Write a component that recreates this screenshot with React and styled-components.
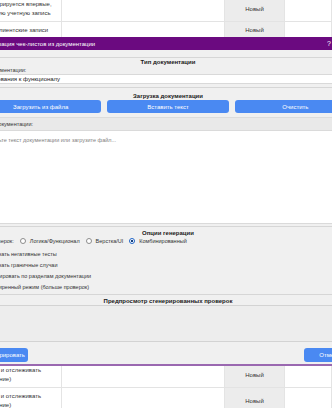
import React from "react";
import styled, { createGlobalStyle } from "styled-components";

const GlobalStyle = createGlobalStyle`
  * { box-sizing: border-box; }
  html, body { margin: 0; padding: 0; background: #fff; }
  body { font-family: "Liberation Sans", Arial, sans-serif; }
`;

const Page = styled.div`
  width: 332px;
  height: 408px;
  overflow: hidden;
  display: flex;
  flex-direction: column;
  background: #fff;
`;

const TableClip = styled.div`
  flex: 0 0 ${(p) => p.$h}px;
  overflow: hidden;
`;

const Rows = styled.div`
  margin-top: -4px;
  margin-left: -44px;
  width: 376px;
`;

const Row = styled.div`
  display: grid;
  grid-template-columns: 106px 163px 60px 1fr;
  border-bottom: 1px solid #e3e3e3;
  font-size: 6px;
  line-height: 9px;
  color: #333;
`;

const Cell = styled.div`
  padding: 4px 4px 3px;
  border-right: 1px solid #e4e4e4;
  white-space: nowrap;
  overflow: hidden;
  background: ${(p) => (p.$grey ? "#ececec" : "#fff")};
  display: flex;
  flex-direction: column;
  justify-content: center;
  align-items: ${(p) => (p.$center ? "center" : "flex-start")};
`;

const Dialog = styled.div`
  flex: 0 0 auto;
  width: 392px;
  margin-left: -28px;
  background: #f0f0f0;
  border-bottom: 2px solid #9a68b0;
  display: flex;
  flex-direction: column;
  font-size: 6px;
  color: #222;
`;

const TitleBar = styled.div`
  height: 13px;
  background: #6b0a80;
  color: #fff;
  display: flex;
  align-items: center;
  justify-content: space-between;
  padding: 0 18px 0 13px;
  font-size: 6px;
`;

const TitleButtons = styled.div`
  display: flex;
  gap: 9px;
  font-size: 7px;
`;

const Body = styled.div`
  padding: 7px 8px 0;
  display: flex;
  flex-direction: column;
`;

const Section = styled.section`
  border-top: 1px solid #d6d6d6;
  padding: ${(p) => p.$pt}px 0 ${(p) => p.$pb}px;
  display: flex;
  flex-direction: column;
`;

const SectionTitle = styled.div`
  font-weight: bold;
  text-align: center;
  line-height: ${(p) => p.$lh || 7}px;
  color: #1a1a1a;
`;

const FieldLabel = styled.div`
  line-height: 8px;
  font-size: 5.5px;
  color: #333;
  margin-left: -2px;
`;

const Combo = styled.div`
  height: 10px;
  background: #fff;
  border: 1px solid #d9d9d9;
  border-radius: 2px;
  display: flex;
  align-items: center;
  justify-content: space-between;
  padding: 0 5px 0 3px;
  color: #222;
`;

const ButtonGrid = styled.div`
  display: grid;
  grid-template-columns: repeat(3, 1fr);
  gap: 6px;
`;

const Button = styled.button`
  height: ${(p) => p.$h}px;
  width: ${(p) => (p.$w ? `${p.$w}px` : "auto")};
  border: none;
  border-radius: 3px;
  background: #4a89f2;
  color: #fff;
  font-family: inherit;
  font-size: 6px;
  padding: 0;
`;

const LabelBand = styled.div`
  margin-top: 4px;
  height: 13px;
  border-top: 1px solid #dcdcdc;
  background: #e9e9e9;
  display: flex;
  align-items: center;
  font-size: 5.5px;
  color: #333;
`;

const Editor = styled.div`
  height: 94px;
  background: #fff;
  border: 1px solid #dadada;
  padding: 6px 3px;
  font-size: 5.5px;
  color: #808080;
`;

const RadioRow = styled.div`
  display: flex;
  align-items: center;
  height: 8px;
  gap: 6px;
  font-size: 5.5px;
  color: #333;
  margin: 0 0 3px -2px;
`;

const Option = styled.label`
  display: flex;
  align-items: center;
  gap: 4px;
  white-space: nowrap;
`;

const Radio = styled.span`
  width: 6px;
  height: 6px;
  border-radius: 50%;
  flex: 0 0 6px;
  border: ${(p) => (p.$on ? "1.5px solid #1d62c6" : "1px solid #8c8c8c")};
  background: ${(p) =>
    p.$on ? "radial-gradient(circle, #16407e 0 1px, #fff 1.4px)" : "#fff"};
`;

const CheckRow = styled.label`
  height: 11px;
  display: flex;
  align-items: center;
  gap: 3px;
  font-size: 5.5px;
  color: #333;
  white-space: nowrap;
  margin-left: -4px;
`;

const Checkbox = styled.span`
  width: 6px;
  height: 6px;
  flex: 0 0 6px;
  border: 1px solid #8c8c8c;
  border-radius: 1px;
  background: #fff;
`;

const Preview = styled.div`
  height: 36px;
  border-top: 1px solid #d3d3d3;
  background: #ededed;
`;

const Footer = styled.div`
  border-top: 1px solid #d3d3d3;
  padding: 6px 0 2px;
  display: flex;
  justify-content: space-between;
`;

const topRows = [
  { lines: ["Клиент регистрируется впервые,", "и создает новую учетную запись"], status: "Новый" },
  { lines: ["Редактирует клиентские записи"], status: "Новый" },
];

const bottomRows = [
  { lines: ["Видеть статус и отслеживать", "(и их выполнение)"], status: "Новый" },
  { lines: ["Видеть статус и отслеживать", "(и их выполнение)"], status: "Новый" },
];

function TableRows({ rows }) {
  return (
    <Rows>
      {rows.map((r, i) => (
        <Row key={i}>
          <Cell>
            {r.lines.map((l, j) => (
              <span key={j}>{l}</span>
            ))}
          </Cell>
          <Cell />
          <Cell $grey $center>{r.status}</Cell>
          <Cell />
        </Row>
      ))}
    </Rows>
  );
}

const checks = [
  "Включать негативные тесты",
  "Включать граничные случаи",
  "Группировать по разделам документации",
  "Расширенный режим (больше проверок)",
];

export default function App() {
  return (
    <Page>
      <GlobalStyle />
      <TableClip $h={37}>
        <TableRows rows={topRows} />
      </TableClip>

      <Dialog>
        <TitleBar>
          <span>Генерация чек-листов из документации</span>
          <TitleButtons>
            <span>?</span>
            <span>✕</span>
          </TitleButtons>
        </TitleBar>
        <Body>
          <Section $pt={0} $pb={3}>
            <SectionTitle $lh={8}>Тип документации</SectionTitle>
            <FieldLabel>Тип документации:</FieldLabel>
            <Combo>
              <span>Требования к функционалу</span>
              <span>▾</span>
            </Combo>
          </Section>

          <Section $pt={5} $pb={2}>
            <SectionTitle>Загрузка документации</SectionTitle>
            <ButtonGrid>
              <Button $h={13}>Загрузить из файла</Button>
              <Button $h={13}>Вставить текст</Button>
              <Button $h={13}>Очистить</Button>
            </ButtonGrid>
            <LabelBand>Текст документации:</LabelBand>
            <Editor>Вставьте текст документации или загрузите файл...</Editor>
          </Section>

          <Section $pt={3} $pb={2}>
            <SectionTitle>Опции генерации</SectionTitle>
            <RadioRow>
              <span>Тип проверок:</span>
              <Option>
                <Radio />
                Логика/Функционал
              </Option>
              <Option>
                <Radio />
                Верстка/UI
              </Option>
              <Option>
                <Radio $on />
                Комбинированный
              </Option>
            </RadioRow>
            {checks.map((c) => (
              <CheckRow key={c}>
                <Checkbox />
                {c}
              </CheckRow>
            ))}
          </Section>

          <Section $pt={3} $pb={0}>
            <SectionTitle>Предпросмотр сгенерированных проверок</SectionTitle>
            <Preview />
          </Section>

          <Footer>
            <Button $h={14} $w={48}>Сгенерировать</Button>
            <Button $h={14} $w={52}>Отмена</Button>
          </Footer>
        </Body>
      </Dialog>

      <TableClip $h={42}>
        <TableRows rows={bottomRows} />
      </TableClip>
    </Page>
  );
}
